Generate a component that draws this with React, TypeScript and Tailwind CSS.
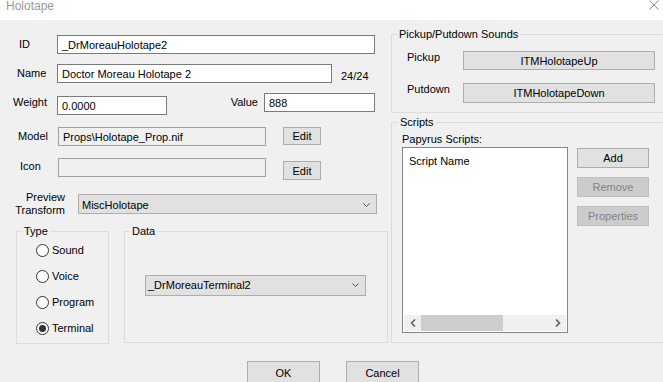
import React from "react";

function Chevron() {
  return (
    <svg width="7" height="5" viewBox="0 0 7 5" className="shrink-0">
      <path d="M0.5 0.5 L3.5 3.5 L6.5 0.5" fill="none" stroke="#505050" strokeWidth="1" />
    </svg>
  );
}

function TextBox({ className, children }: { className: string; children?: React.ReactNode }) {
  return (
    <div className={`flex items-center h-[19px] border pl-[4px] pt-px leading-[13px] whitespace-nowrap overflow-hidden ${className}`}>
      {children}
    </div>
  );
}

function Btn({ className, children, disabled }: { className: string; children: React.ReactNode; disabled?: boolean }) {
  return (
    <div
      className={`flex items-center justify-center border pt-px leading-[13px] whitespace-nowrap ${
        disabled ? "bg-[#cccccc] border-[#bfbfbf] text-[#838383]" : "bg-[#e1e1e1] border-[#adadad] text-black"
      } ${className}`}
    >
      {children}
    </div>
  );
}

function Combo({ className, children }: { className: string; children: React.ReactNode }) {
  return (
    <div className={`flex items-center justify-between border border-[#adadad] bg-[#e1e1e1] leading-[13px] pr-[6px] ${className}`}>
      <span>{children}</span>
      <Chevron />
    </div>
  );
}

function Radio({ label, checked }: { label: string; checked?: boolean }) {
  return (
    <div className="flex items-center h-[14px]">
      <span className="flex items-center justify-center w-[13px] h-[13px] rounded-full border border-[#333333] bg-white">
        {checked && <span className="w-[7px] h-[7px] rounded-full bg-[#333333]" />}
      </span>
      <span className="ml-[3px] leading-[13px]">{label}</span>
    </div>
  );
}

function Arrow({ dir }: { dir: "left" | "right" }) {
  return (
    <div className="w-[17px] flex items-center justify-center">
      <svg width="6" height="8" viewBox="0 0 6 8">
        <path
          d={dir === "left" ? "M5 0.5 L1.5 4 L5 7.5" : "M1 0.5 L4.5 4 L1 7.5"}
          fill="none"
          stroke="#606060"
          strokeWidth="1.6"
        />
      </svg>
    </div>
  );
}

export default function App() {
  return (
    <div className="w-[663px] h-[382px] overflow-hidden bg-[#f0f0f0] text-[11px] text-black font-['Liberation_Sans',Arial,sans-serif] flex flex-col">
      {/* title bar */}
      <div className="h-[20px] shrink-0 bg-white flex items-start justify-between">
        <span className="pl-[6px] text-[12px] leading-[13px] text-[#999999]">Holotape</span>
        <svg className="mr-[4px]" width="10" height="10" viewBox="0 0 10 10">
          <path d="M0.5 0.5 L9.5 9.5 M9.5 0.5 L0.5 9.5" stroke="#8c8c8c" strokeWidth="1" />
        </svg>
      </div>

      <div className="flex shrink-0">
        {/* left column */}
        <div className="w-[391px] shrink-0 flex flex-col">
          <div className="flex items-start mt-[15px]">
            <span className="w-[57px] pl-[19px] leading-[19px]">ID</span>
            <TextBox className="w-[318px] bg-white border-[#7a7a7a]">_DrMoreauHolotape2</TextBox>
          </div>

          <div className="flex items-start mt-[10px]">
            <span className="w-[57px] pl-[17px] leading-[19px]">Name</span>
            <TextBox className="w-[275px] bg-white border-[#7a7a7a]">Doctor Moreau Holotape 2</TextBox>
            <span className="ml-[9px] mt-[6px] leading-[13px]">24/24</span>
          </div>

          <div className="flex items-start mt-[10px]">
            <span className="w-[57px] pl-[13px] leading-[19px]">Weight</span>
            <TextBox className="w-[110px] mt-[3px] bg-white border-[#7a7a7a]">0.0000</TextBox>
            <span className="w-[97px] pr-[6px] text-right leading-[19px]">Value</span>
            <TextBox className="w-[111px] bg-white border-[#7a7a7a]">888</TextBox>
          </div>

          <div className="flex items-start mt-[12px]">
            <span className="w-[58px] pl-[18px] leading-[19px]">Model</span>
            <TextBox className="w-[208px] bg-[#f0f0f0] border-[#a0a0a0]">Props\Holotape_Prop.nif</TextBox>
            <Btn className="ml-[17px] w-[38px] h-[18px]">Edit</Btn>
          </div>

          <div className="flex items-start mt-[12px]">
            <span className="w-[58px] pl-[20px] leading-[19px] -mt-[1px]">Icon</span>
            <TextBox className="w-[208px] bg-[#f0f0f0] border-[#a0a0a0]" />
            <Btn className="ml-[17px] mt-[3px] w-[38px] h-[19px]">Edit</Btn>
          </div>

          <div className="flex items-start mt-[14px]">
            <span className="w-[65px] text-right leading-[13px] -mt-[3px]">
              Preview
              <br />
              Transform
            </span>
            <Combo className="ml-[13px] w-[299px] h-[20px] pl-[3px] pt-[2px]">MiscHolotape</Combo>
          </div>

          <div className="flex items-start mt-[7px]">
            <fieldset className="ml-[16px] w-[93px] h-[120px] border border-[#dcdcdc]">
              <legend className="ml-[5px] px-[2px] leading-[14px]">Type</legend>
              <div className="flex flex-col gap-[12px] pt-[5px] pl-[19px]">
                <Radio label="Sound" />
                <Radio label="Voice" />
                <Radio label="Program" />
                <Radio label="Terminal" checked />
              </div>
            </fieldset>
            <fieldset className="ml-[15px] w-[264px] h-[119px] border border-[#dcdcdc]">
              <legend className="ml-[5px] px-[2px] leading-[14px]">Data</legend>
              <Combo className="ml-[20px] mt-[37px] w-[221px] h-[21px] pl-[2px]">_DrMoreauTerminal2</Combo>
            </fieldset>
          </div>
        </div>

        {/* right column */}
        <div className="w-[290px] shrink-0 flex flex-col">
          <fieldset className="mt-[7px] w-[290px] h-[86px] border border-[#dcdcdc]">
            <legend className="ml-[5px] px-[2px] leading-[14px]">Pickup/Putdown Sounds</legend>
            <div className="flex items-start mt-[10px]">
              <span className="w-[71px] pl-[15px] leading-[13px]">Pickup</span>
              <Btn className="w-[192px] h-[19px]">ITMHolotapeUp</Btn>
            </div>
            <div className="flex items-start mt-[13px]">
              <span className="w-[71px] pl-[15px] leading-[13px]">Putdown</span>
              <Btn className="w-[192px] h-[20px]">ITMHolotapeDown</Btn>
            </div>
          </fieldset>

          <fieldset className="mt-[2px] w-[290px] h-[228px] border border-[#dcdcdc]">
            <legend className="ml-[6px] px-[2px] leading-[14px]">Scripts</legend>
            <div className="pl-[10px] mt-[4px] leading-[13px]">Papyrus Scripts:</div>
            <div className="flex items-start mt-[1px]">
              <div className="ml-[10px] w-[166px] h-[186px] border border-[#828790] bg-white flex flex-col">
                <div className="flex-1 pl-[6px] pt-[7px] leading-[13px]">Script Name</div>
                <div className="h-[16px] mx-px mb-px flex bg-[#f0f0f0]">
                  <Arrow dir="left" />
                  <div className="w-[82px] bg-[#cdcdcd]" />
                  <div className="flex-1" />
                  <Arrow dir="right" />
                </div>
              </div>
              <div className="ml-[9px] mt-[1px] flex flex-col gap-[9px]">
                <Btn className="w-[72px] h-[20px]">Add</Btn>
                <Btn className="w-[72px] h-[20px]" disabled>
                  Remove
                </Btn>
                <Btn className="w-[72px] h-[20px]" disabled>
                  Properties
                </Btn>
              </div>
            </div>
          </fieldset>
        </div>
      </div>

      <div className="flex gap-[26px] pl-[247px] mt-[17px] shrink-0">
        <Btn className="w-[73px] h-[23px]">OK</Btn>
        <Btn className="w-[73px] h-[23px]">Cancel</Btn>
      </div>
    </div>
  );
}
